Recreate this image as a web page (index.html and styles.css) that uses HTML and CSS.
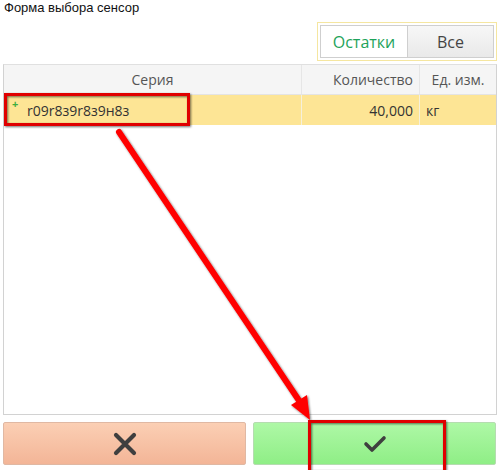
FILE: index.html
```html
<!DOCTYPE html>
<html lang="ru">
<head>
<meta charset="utf-8">
<link rel="stylesheet" href="styles.css">
</head>
<body>
<div class="page">
  <div class="title">Форма выбора сенсор</div>
  <div class="toolbar">
    <div class="toggle">
      <div class="tog tog-active">Остатки</div>
      <div class="tog">Все</div>
    </div>
  </div>
  <div class="table">
    <div class="thead">
      <div class="c c1 center">Серия</div>
      <div class="c c2 right">Количество</div>
      <div class="c c3 center">Ед. изм.</div>
    </div>
    <div class="trow">
      <div class="c c1"><span class="plus">+</span>r09r8з9r8з9н8з</div>
      <div class="c c2 right">40,000</div>
      <div class="c c3">кг</div>
    </div>
  </div>
  <div class="actions">
    <div class="btn btn-cancel">
      <svg width="26" height="26" viewBox="0 0 26 26"><path d="M4 4 L22 22 M22 4 L4 22" stroke="#3f3f3f" stroke-width="4.2" stroke-linecap="round"/></svg>
    </div>
    <div class="btn btn-ok">
      <svg width="24" height="20" viewBox="0 0 24 20"><path d="M3 10 L9 16 L21 4" fill="none" stroke="#3f3f3f" stroke-width="3.6" stroke-linecap="round" stroke-linejoin="round"/></svg>
    </div>
  </div>
  <svg class="annot" width="504" height="470" viewBox="0 0 504 470">
    <defs>
      <filter id="sh" x="-10%" y="-10%" width="120%" height="120%">
        <feDropShadow dx="1" dy="1" stdDeviation="0.8" flood-color="#000" flood-opacity="0.55"/>
      </filter>
    </defs>
    <g filter="url(#sh)">
      <rect x="5.5" y="94.5" width="183" height="30" fill="none" stroke="#e00000" stroke-width="3"/>
      <rect x="309.5" y="421.5" width="135" height="50" fill="none" stroke="#e00000" stroke-width="3"/>
      <line x1="119" y1="132" x2="302" y2="405" stroke="#ff0000" stroke-width="6" stroke-linecap="round"/>
      <polygon points="310,420 291,405 307,395" fill="#ff0000"/>
    </g>
  </svg>
</div>
</body>
</html>
```
FILE: styles.css
```css
html, body { margin: 0; padding: 0; background: #fff; }
.page { position: relative; width: 504px; height: 470px; overflow: hidden; }
.title {
  font-family: "Liberation Sans", Arial, sans-serif;
  font-size: 13px; color: #111;
  padding: 0 0 0 4px; height: 21px; box-sizing: border-box;
}
.toolbar { display: flex; justify-content: flex-end; padding-right: 7px; }
.toggle {
  display: flex; border: 1px solid #f5e6a0; padding: 2px; width: 180px; height: 39px; box-sizing: border-box;
  margin-top: 1px;
}
.tog {
  flex: 1; display: flex; align-items: center; justify-content: center;
  font-family: "Open Sans", "Noto Sans", sans-serif; font-size: 16px; color: #444;
  border: 1px solid #cfcfcf;
  background: linear-gradient(#f7f7f7, #e9e9e9);
}
.tog-active { background: #fff; color: #1ea35a; border-right: none; flex: 0 0 86px; }
.table {
  margin: 3px 7px 0 3px; height: 351px; box-sizing: border-box;
  border: 1px solid #d2d2d2; border-top-color: #e0e0e0;
  font-family: "Open Sans", "Noto Sans", sans-serif; font-size: 14px; color: #444;
}
.thead { display: flex; height: 29px; background: #f5f5f5; border-bottom: 1px solid #e4e4e4; color: #555; }
.trow { display: flex; height: 30px; background: #fde595; color: #333; }
.c { display: flex; align-items: center; padding: 0 6px; box-sizing: border-box; position: relative; }
.c1 { width: 297px; }
.c2 { width: 118px; border-left: 1px solid #e6e6e6; }
.c3 { flex: 1; border-left: 1px solid #e6e6e6; }
.trow .c2, .trow .c3 { border-left-color: #f5f0dc; }
.center { justify-content: center; }
.right { justify-content: flex-end; }
.trow .c1 { padding-left: 23px; }
.plus { position: absolute; left: 8px; top: 1px; color: #3fae3f; font-size: 11px; font-weight: bold; }
.actions { display: flex; gap: 7px; margin: 7px 8px 0 3px; height: 43px; }
.btn { flex: 1; display: flex; align-items: center; justify-content: center; border: 1px solid #d8d8d8; box-sizing: border-box; border-radius: 2px; }
.btn-cancel { background: linear-gradient(#fbcfb4, #f3b597); border-color: #e0b8a3; }
.btn-ok { background: linear-gradient(#aef8a6, #8fee86); border-color: #b5dcb0; }
.annot { position: absolute; left: 0; top: 0; pointer-events: none; }
```
